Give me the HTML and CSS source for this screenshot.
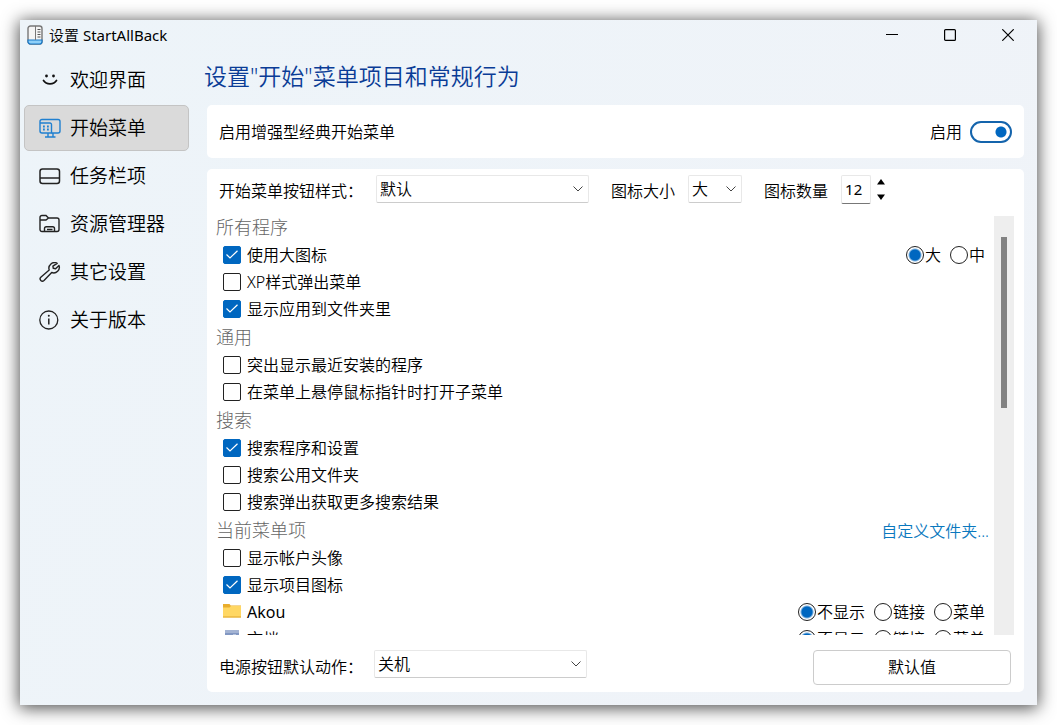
FILE: index.html
```
<!DOCTYPE html>
<html lang="zh-CN">
<head>
<meta charset="utf-8">
<title>设置 StartAllBack</title>
<link rel="stylesheet" href="styles.css">
</head>
<body>
<div class="window">
  <header class="titlebar">
    <svg class="app-icon" width="16" height="20" viewBox="0 0 16 20" fill="none">
      <rect x="1" y="1" width="14" height="18" rx="2.5" fill="#f4f4f4" stroke="#777" stroke-width="1.4"/>
      <path d="M1 15h14v1.500a2.500 2.500 0 0 1-2.500 2.500h-9a2.500 2.500 0 0 1-2.500-2.500z" fill="#8fd0f8" stroke="#1878c8" stroke-width="1.200"/>
      <path d="M8.500 1v14" stroke="#777"/>
      <path d="M10.500 4.500h3M10.500 7h3M10.500 9.500h3M10.500 12h3" stroke="#555"/>
    </svg>
    <span class="app-title">设置 <span class="latin">StartAllBack</span></span>
    <div class="window-buttons">
      <button type="button" aria-label="最小化"><svg width="12" height="12" viewBox="0 0 12 12"><path d="M0 5.500h12" stroke="#000"/></svg></button>
      <button type="button" aria-label="最大化"><svg width="12" height="12" viewBox="0 0 12 12"><rect x=".6" y=".6" width="10.800" height="10.800" rx="1" fill="none" stroke="#000" stroke-width="1.200"/></svg></button>
      <button type="button" aria-label="关闭"><svg width="12" height="12" viewBox="0 0 12 12"><path d="M.3.3l11.400 11.400M11.700.3L.3 11.700" stroke="#000" stroke-width="1.200"/></svg></button>
    </div>
  </header>
  <div class="body">
    <nav class="sidebar">
      <button type="button" class="nav-item">
        <svg width="22" height="20" viewBox="0 0 22 20" fill="none" stroke="#111"><circle cx="7.500" cy="6" r="1.400" fill="#111" stroke="none"/><circle cx="14.500" cy="6" r="1.400" fill="#111" stroke="none"/><path d="M4.500 10.500c1.500 2.400 4 3.300 6.500 3.300s5-.9 6.500-3.300" stroke-width="1.700" stroke-linecap="round"/></svg>
        欢迎界面</button>
      <button type="button" class="nav-item active" aria-current="page">
        <svg width="22" height="20" viewBox="0 0 22 20" fill="none" stroke="#2080d0" stroke-width="1.400"><path d="M10 1.500h9a2 2 0 0 1 2 2v9.500a2 2 0 0 1-2 2h-6.500"/><path d="M10 1.500H3a2 2 0 0 0-2 2V13a2 2 0 0 0 2 2h9.500V6.500a1.500 1.500 0 0 0-1.500-1.500H1M9 15v3.500M14 15v3.500M6 19h10.500"/><path d="M4 8.500h1.800M8 8.500h1.800M4 11.500h1.800M8 11.500h1.800" stroke-width="1.800"/></svg>
        开始菜单</button>
      <button type="button" class="nav-item">
        <svg width="22" height="20" viewBox="0 0 22 20" fill="none" stroke="#222" stroke-width="1.500"><rect x="1" y="3" width="19.500" height="14.500" rx="2.500"/><path d="M1 12h19.500"/></svg>
        任务栏项</button>
      <button type="button" class="nav-item">
        <svg width="22" height="20" viewBox="0 0 22 20" fill="none" stroke="#222" stroke-width="1.400"><path d="M1 6V3.500a2 2 0 0 1 2-2h4l2.500 2.500h8.500a2 2 0 0 1 2 2v9.500a2 2 0 0 1-2 2H3a2 2 0 0 1-2-2V6h6l2.500-2"/><path d="M5.500 17.500v-3a1.800 1.800 0 0 1 1.800-1.800h6.400a1.800 1.800 0 0 1 1.800 1.800v3M8 15.500h5.500"/></svg>
        资源管理器</button>
      <button type="button" class="nav-item">
        <svg width="22" height="20" viewBox="0 0 22 20" fill="none" stroke="#222" stroke-width="1.400" stroke-linejoin="round"><path d="M18.200 1.300a5.600 5.600 0 0 0-8 6.700L1.800 15.200a2.300 2.300 0 0 0 3.200 3.300l7.700-8a5.600 5.600 0 0 0 7.300-7.100l-3.400 3.300-2.300-.4-.4-2.200z"/></svg>
        其它设置</button>
      <button type="button" class="nav-item">
        <svg width="22" height="20" viewBox="0 0 22 20" fill="none" stroke="#222" stroke-width="1.300"><circle cx="9.800" cy="10" r="9"/><path d="M9.800 8.500v6" stroke-width="1.500"/><circle cx="9.800" cy="5.700" r="1" fill="#222" stroke="none"/></svg>
        关于版本</button>
    </nav>
    <main class="content">
      <h1>设置"开始"菜单项目和常规行为</h1>
      <section class="card enable">
        <span>启用增强型经典开始菜单</span>
        <label class="enable-toggle">启用 <input type="checkbox" class="toggle" checked></label>
      </section>
      <section class="card settings">
        <div class="options">
          <label for="style">开始菜单按钮样式：</label>
          <select id="style" class="select wide"><option>默认</option></select>
          <label for="size">图标大小</label>
          <select id="size" class="select small"><option>大</option></select>
          <label for="count">图标数量</label>
          <input id="count" class="count" type="text" value="12">
          <div class="spinner">
            <button type="button" aria-label="增加"><svg width="8" height="6" viewBox="0 0 8 6"><path d="M4 0l4 5.500H0z"/></svg></button>
            <button type="button" aria-label="减少"><svg width="8" height="6" viewBox="0 0 8 6"><path d="M4 6l4-5.500H0z"/></svg></button>
          </div>
        </div>
        <div class="scroll">
          <div class="list">
            <section>
              <h2>所有程序</h2>
              <div class="row">
                <label><input type="checkbox" checked>使用大图标</label>
                <div class="choices">
                  <label><input type="radio" name="icons" checked>大</label>
                  <label><input type="radio" name="icons">中</label>
                </div>
              </div>
              <div class="row"><label><input type="checkbox">XP样式弹出菜单</label></div>
              <div class="row"><label><input type="checkbox" checked>显示应用到文件夹里</label></div>
            </section>
            <section>
              <h2>通用</h2>
              <div class="row"><label><input type="checkbox">突出显示最近安装的程序</label></div>
              <div class="row"><label><input type="checkbox">在菜单上悬停鼠标指针时打开子菜单</label></div>
            </section>
            <section>
              <h2>搜索</h2>
              <div class="row"><label><input type="checkbox" checked>搜索程序和设置</label></div>
              <div class="row"><label><input type="checkbox">搜索公用文件夹</label></div>
              <div class="row"><label><input type="checkbox">搜索弹出获取更多搜索结果</label></div>
            </section>
            <section>
              <div class="section-head"><h2>当前菜单项</h2><a href="#">自定义文件夹...</a></div>
              <div class="row"><label><input type="checkbox">显示帐户头像</label></div>
              <div class="row"><label><input type="checkbox" checked>显示项目图标</label></div>
              <div class="row">
                <span class="entry"><svg width="18" height="18" viewBox="0 0 18 18"><path d="M0 1h6.500l1.200 1.500H18V14H0z" fill="#e9ad2c"/><path d="M0 4.500h6.500L8 3h10v11.500H0z" fill="#ffd763"/><path d="M0 14h18" stroke="#dfa52c"/></svg><span class="latin">Akou</span></span>
                <div class="choices">
                  <label><input type="radio" name="user" checked>不显示</label>
                  <label><input type="radio" name="user">链接</label>
                  <label><input type="radio" name="user">菜单</label>
                </div>
              </div>
              <div class="row">
                <span class="entry"><svg width="18" height="18" viewBox="0 0 18 18"><path d="M2 0h14v18H2z" fill="#8197c2"/><path d="M2 0h14v3H2z" fill="#a3b3d3"/><path d="M5 6h3M10 5h3M5 9h8" stroke="#e8eef8"/></svg>文档</span>
                <div class="choices">
                  <label><input type="radio" name="docs" checked>不显示</label>
                  <label><input type="radio" name="docs">链接</label>
                  <label><input type="radio" name="docs">菜单</label>
                </div>
              </div>
            </section>
          </div>
          <div class="scrollbar"><div class="thumb"></div></div>
        </div>
        <div class="footer">
          <label for="power">电源按钮默认动作：</label>
          <select id="power" class="select wide"><option>关机</option></select>
          <button type="button" class="reset">默认值</button>
        </div>
      </section>
    </main>
  </div>
</div>
</body>
</html>
```
FILE: styles.css
```
* { box-sizing: border-box; }

body {
  margin: 0;
  height: 100vh;
  padding: 20px;
  background: #fff;
  color: #000;
  font: 350 16px/24px "Noto Sans", "Noto Sans CJK SC", sans-serif;
}

button, input, select { margin: 0; font: inherit; color: inherit; }
button { padding: 0; border: 0; background: none; }
h1, h2 { margin: 0; font-weight: inherit; }
svg { flex: none; }
.latin { font-weight: 400; }

.window {
  display: flex;
  flex-direction: column;
  height: 100%;
  background: linear-gradient(120deg, #edf4f9, #f0f3f8);
  box-shadow: 0 2px 16px 1px rgba(0, 0, 0, .7);
}

.titlebar {
  display: flex;
  align-items: center;
  gap: 6px;
  height: 30px;
  padding-left: 7px;
}
.app-title { font-size: 15px; }
.window-buttons { display: flex; margin-left: auto; }
.window-buttons button {
  display: flex;
  align-items: center;
  justify-content: center;
  width: 58px;
  height: 30px;
}

.body {
  flex: 1;
  min-height: 0;
  display: flex;
  gap: 18px;
  padding: 7px 13px 13px 4px;
}

.sidebar { flex: none; width: 165px; display: flex; flex-direction: column; gap: 2px; }
.nav-item {
  display: flex;
  align-items: center;
  gap: 9px;
  height: 46px;
  padding-left: 14px;
  border: 1px solid transparent;
  border-radius: 5px;
  font-size: 19px;
  white-space: nowrap;
}
.nav-item.active { background: #dadada; border-color: #c4c4c4; }

.content { flex: 1; min-width: 0; display: flex; flex-direction: column; }
h1 {
  height: 48px;
  margin-left: -3px;
  font-size: 23px;
  line-height: 39px;
  color: #0a3c96;
}

.card { background: #fff; border-radius: 5px; }
.enable {
  display: flex;
  align-items: center;
  justify-content: space-between;
  height: 53px;
  margin-bottom: 11px;
  padding: 0 12px;
}
.enable-toggle { display: flex; align-items: center; gap: 8px; }
.toggle {
  appearance: none;
  width: 42px;
  height: 22px;
  border: 2px solid #1464ac;
  border-radius: 11px;
  background: radial-gradient(circle at 29px 9px, #0067c0 5px, transparent 6px);
}

.settings { flex: 1; min-height: 0; display: flex; flex-direction: column; }
.options { display: flex; align-items: center; height: 47px; padding: 0 12px 7px; }
.options label, .footer label { white-space: nowrap; }
.options label { padding-top: 4px; }

.select {
  appearance: none;
  height: 28px;
  padding: 0 3px;
  border: 1px solid #e8e8e8;
  border-bottom-color: #ccc;
  border-radius: 2px;
  background: #fff url("data:image/svg+xml,%3Csvg xmlns='http://www.w3.org/2000/svg' width='10' height='6'%3E%3Cpath d='M.5.5L5 5 9.500.5' fill='none' stroke='%23444'/%3E%3C/svg%3E") no-repeat right 5px center;
}
.select.wide { width: 213px; margin: 0 22px 0 13px; }
.select.small { width: 54px; margin: 0 22px 0 13px; }
.count {
  width: 30px;
  height: 29px;
  margin-left: 13px;
  padding: 0 3px;
  border: 1px solid #e8e8e8;
  border-bottom-color: #777;
  border-radius: 2px;
  font-size: 15px;
  font-weight: 400;
}
.spinner { display: flex; flex-direction: column; gap: 9px; margin-left: 6px; }
.spinner button, .spinner svg { display: block; }

.scroll { flex: 1; min-height: 0; display: flex; padding-right: 10px; }
.list { flex: 1; min-width: 0; overflow: hidden; display: flex; flex-direction: column; gap: 4px; }
.list section { flex: none; }
h2 {
  height: 25px;
  padding-left: 9px;
  font-size: 18px;
  font-weight: 300;
  line-height: 23px;
  color: #666;
}
.section-head { display: flex; justify-content: space-between; padding-right: 5px; }
.section-head a { color: #0a78be; text-decoration: none; }
.row {
  display: flex;
  align-items: center;
  justify-content: space-between;
  height: 27px;
  padding: 0 9px 0 16px;
}
.row label, .entry { display: flex; align-items: center; gap: 6px; }
.choices { display: flex; gap: 9px; }
.choices label { gap: 1px; }

.row input { appearance: none; flex: none; width: 18px; height: 18px; border: 1px solid #222; }
.row input[type="checkbox"] { border-radius: 2px; }
.row input[type="checkbox"]:checked {
  border-color: #0067c0;
  background: #0067c0 url("data:image/svg+xml,%3Csvg xmlns='http://www.w3.org/2000/svg' width='12' height='9'%3E%3Cpath d='M.5 4.500l3.500 3.500L11.500.7' fill='none' stroke='white' stroke-width='1.200'/%3E%3C/svg%3E") no-repeat center;
}
.row input[type="radio"] { border-radius: 50%; }
.row input[type="radio"]:checked { background: radial-gradient(circle, #0067c0 5px, transparent 7px); }

.scrollbar { flex: none; width: 20px; padding: 21px 7px; background: #eee; }
.thumb { height: 171px; background: #828282; }

.footer { display: flex; align-items: center; height: 57px; padding: 7px 13px 0 12px; }
.footer .select { margin-left: 11px; margin-bottom: 7px; }
.reset {
  width: 198px;
  height: 35px;
  margin-left: auto;
  border: 1px solid #ccc;
  border-radius: 4px;
  background: #fff;
}
```
